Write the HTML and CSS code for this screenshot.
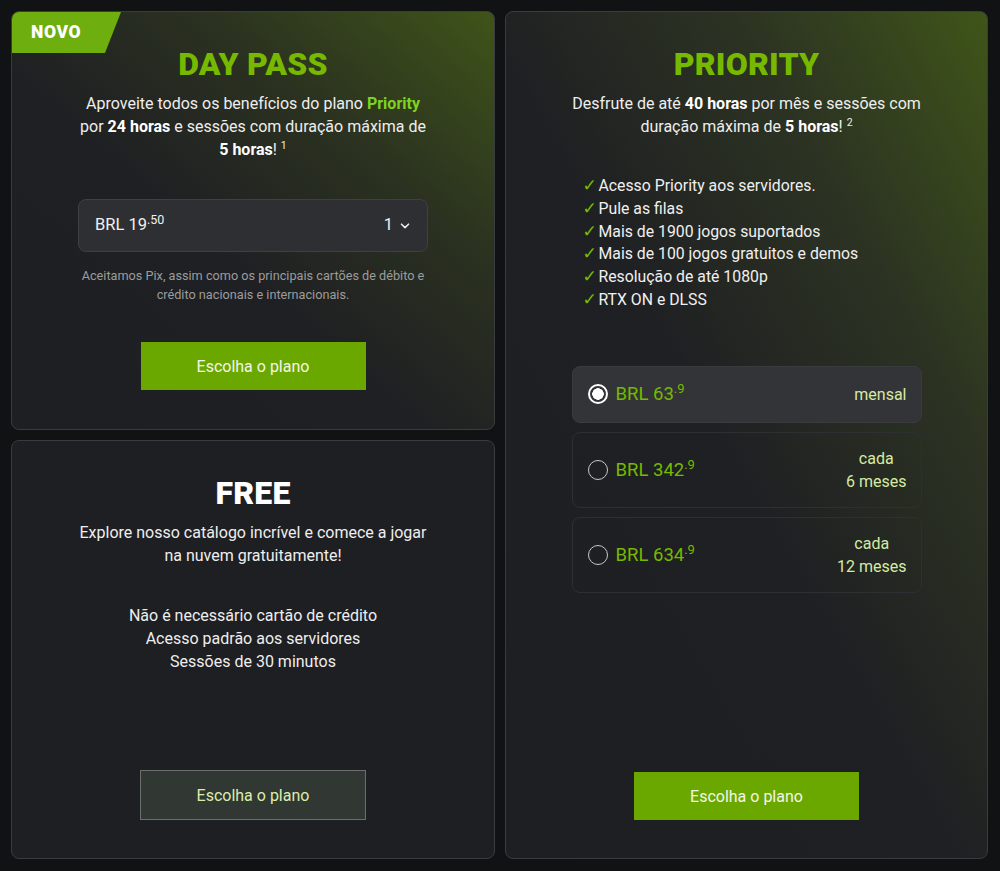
FILE: index.html
```html
<!DOCTYPE html>
<html lang="pt-BR">
<head>
<meta charset="utf-8">
<title>Planos</title>
<link rel="stylesheet" href="styles.css">
</head>
<body>
<main class="plans">
  <div class="col-left">
    <section class="card card-green card-daypass">
      <div class="badge">NOVO</div>
      <h2 class="title green">DAY PASS</h2>
      <p class="desc">Aproveite todos os benefícios do plano <b class="hl">Priority</b><br>por <b>24 horas</b> e sessões com duração máxima de<br><b>5 horas</b>! <sup class="note">1</sup></p>
      <div class="select">
        <span class="sel-price">BRL 19<sup>.50</sup></span>
        <span class="sel-qty">1
          <svg class="chev" width="10" height="6" viewBox="0 0 10 6"><path d="M1.5 1.2 L5 4.6 L8.5 1.2" fill="none" stroke="#e8e8e8" stroke-width="1.6" stroke-linecap="round" stroke-linejoin="round"/></svg>
        </span>
      </div>
      <p class="small">Aceitamos Pix, assim como os principais cartões de débito e<br>crédito nacionais e internacionais.</p>
      <button class="btn btn-green btn-daypass">Escolha o plano</button>
    </section>
    <section class="card card-free">
      <h2 class="title white">FREE</h2>
      <p class="desc">Explore nosso catálogo incrível e comece a jogar<br>na nuvem gratuitamente!</p>
      <ul class="free-list">
        <li>Não é necessário cartão de crédito</li>
        <li>Acesso padrão aos servidores</li>
        <li>Sessões de 30 minutos</li>
      </ul>
      <button class="btn btn-dark">Escolha o plano</button>
    </section>
  </div>
  <section class="card card-green card-priority">
    <h2 class="title green">PRIORITY</h2>
    <p class="desc">Desfrute de até <b>40 horas</b> por mês e sessões com<br>duração máxima de <b>5 horas</b>! <sup class="note">2</sup></p>
    <div class="inner">
      <ul class="check-list">
        <li><span class="check">✓</span>Acesso Priority aos servidores.</li>
        <li><span class="check">✓</span>Pule as filas</li>
        <li><span class="check">✓</span>Mais de 1900 jogos suportados</li>
        <li><span class="check">✓</span>Mais de 100 jogos gratuitos e demos</li>
        <li><span class="check">✓</span>Resolução de até 1080p</li>
        <li><span class="check">✓</span>RTX ON e DLSS</li>
      </ul>
      <div class="options">
        <label class="option selected">
          <span class="radio on"></span>
          <span class="opt-price">BRL 63<sup>.9</sup></span>
          <span class="opt-period">mensal</span>
        </label>
        <label class="option tall">
          <span class="radio"></span>
          <span class="opt-price">BRL 342<sup>.9</sup></span>
          <span class="opt-period">cada<br>6 meses</span>
        </label>
        <label class="option tall">
          <span class="radio"></span>
          <span class="opt-price">BRL 634<sup>.9</sup></span>
          <span class="opt-period">cada<br>12 meses</span>
        </label>
      </div>
    </div>
    <button class="btn btn-green">Escolha o plano</button>
  </section>
</main>
</body>
</html>
```
FILE: styles.css
```css
* { box-sizing: border-box; }
html, body { margin: 0; padding: 0; }
body {
  background: #111214;
  font-family: Roboto, "Noto Sans", "Liberation Sans", sans-serif;
  color: #ececec;
}
.plans {
  display: grid;
  grid-template-columns: 484px 483px;
  gap: 10px;
  padding: 11px 12px 12px 11px;
  height: 871px;
}
.col-left {
  display: grid;
  grid-template-rows: 1fr 1fr;
  gap: 10px;
}
.card {
  position: relative;
  overflow: hidden;
  background: #1e1f22;
  border: 1px solid #3a3b3e;
  border-radius: 8px;
  display: flex;
  flex-direction: column;
  align-items: center;
  text-align: center;
  padding: 33px 20px 38px;
}
.card-green {
  background: linear-gradient(to bottom left, #3f5419 0%, #2b3220 30%, #1f2023 57%, #1e1f22 100%);
}
.card-priority {
  background: linear-gradient(to bottom left, #3f5519 0%, #2c3322 26%, #1f2023 53%, #1e1f22 100%);
}
.badge {
  position: absolute;
  left: 0;
  top: 0;
  width: 109px;
  height: 41px;
  background: #6eae0e;
  clip-path: polygon(0 0, 100% 0, calc(100% - 16px) 100%, 0 100%);
  color: #fff;
  font-weight: 900;
  font-size: 17.5px;
  letter-spacing: 0.6px;
  line-height: 41px;
  text-align: left;
  padding-left: 19px;
}
.title {
  margin: 0 0 9px;
  font-size: 32px;
  font-weight: 900;
  line-height: 38px;
  letter-spacing: 0.2px;
}
.green { color: #76b900; }
.white { color: #ffffff; }
.desc {
  margin: 0;
  font-size: 16px;
  line-height: 23px;
  color: #eeeeee;
}
.desc b { font-weight: 700; color: #fff; }
.desc b.hl { color: #7ed321; }
.note { font-size: 10.5px; vertical-align: 6px; line-height: 0; }
.select {
  margin-top: 38px;
  width: 350px;
  height: 53px;
  background: #2e2f32;
  border: 1px solid #3f4043;
  border-radius: 8px;
  display: flex;
  align-items: center;
  justify-content: space-between;
  padding: 0 17px 2px 16px;
  font-size: 16.5px;
  color: #f0f0f0;
}
.sel-price sup {
  font-size: 12.5px;
  vertical-align: 6px;
  line-height: 0;
}
.sel-qty { display: flex; align-items: center; gap: 7px; }
.chev { margin-top: 2px; }
.small {
  margin: 14px 0 0;
  font-size: 12.7px;
  line-height: 19px;
  color: #9c9c9c;
}
.btn {
  font-family: inherit;
  font-size: 16px;
  width: 225px;
  height: 48px;
  border: 0;
  cursor: pointer;
}
.btn-green {
  background: #6aa800;
  color: #f2f6e8;
  margin-top: auto;
}
.btn-daypass { margin-top: 38px; }
.btn-dark {
  margin-top: auto;
  height: 50px;
  width: 226px;
  background: #313732;
  border: 1px solid #6b6f6b;
  color: #dbeeaa;
}
.free-list {
  list-style: none;
  margin: 37px 0 0;
  padding: 0;
  font-size: 16px;
  line-height: 23px;
  color: #eeeeee;
}
.inner {
  width: 350px;
  display: flex;
  flex-direction: column;
  align-items: stretch;
  text-align: left;
}
.check-list {
  list-style: none;
  margin: 37px 0 0;
  padding: 0 0 0 11px;
  font-size: 15.8px;
  line-height: 22.8px;
  color: #f0f0f0;
}
.check {
  color: #76c000;
  display: inline-block;
  width: 16px;
  font-size: 17px;
  font-family: "DejaVu Sans", sans-serif;
  line-height: 0;
}
.options {
  margin-top: 54px;
  display: flex;
  flex-direction: column;
  gap: 9px;
}
.option {
  display: flex;
  align-items: center;
  height: 76px;
  border: 1px solid #2e2f32;
  border-radius: 8px;
  padding: 0 14px 0 15px;
}
.option.selected {
  height: 57px;
  background: #333437;
  border-color: #3a3b3e;
}
.radio {
  width: 20px;
  height: 20px;
  border-radius: 50%;
  border: 1.5px solid #c8c8c8;
  margin-right: 8px;
  flex: none;
}
.radio.on {
  border: 2px solid #ffffff;
  background: radial-gradient(circle, #ffffff 0 5.5px, transparent 6px);
}
.opt-price {
  color: #76b900;
  font-size: 18.5px;
  flex: 1;
}
.opt-price sup {
  color: #76b900;
  font-size: 13px;
  vertical-align: 7px;
  line-height: 0;
}
.opt-period {
  color: #d6eaa4;
  font-size: 16px;
  line-height: 23px;
  text-align: center;
}
```
